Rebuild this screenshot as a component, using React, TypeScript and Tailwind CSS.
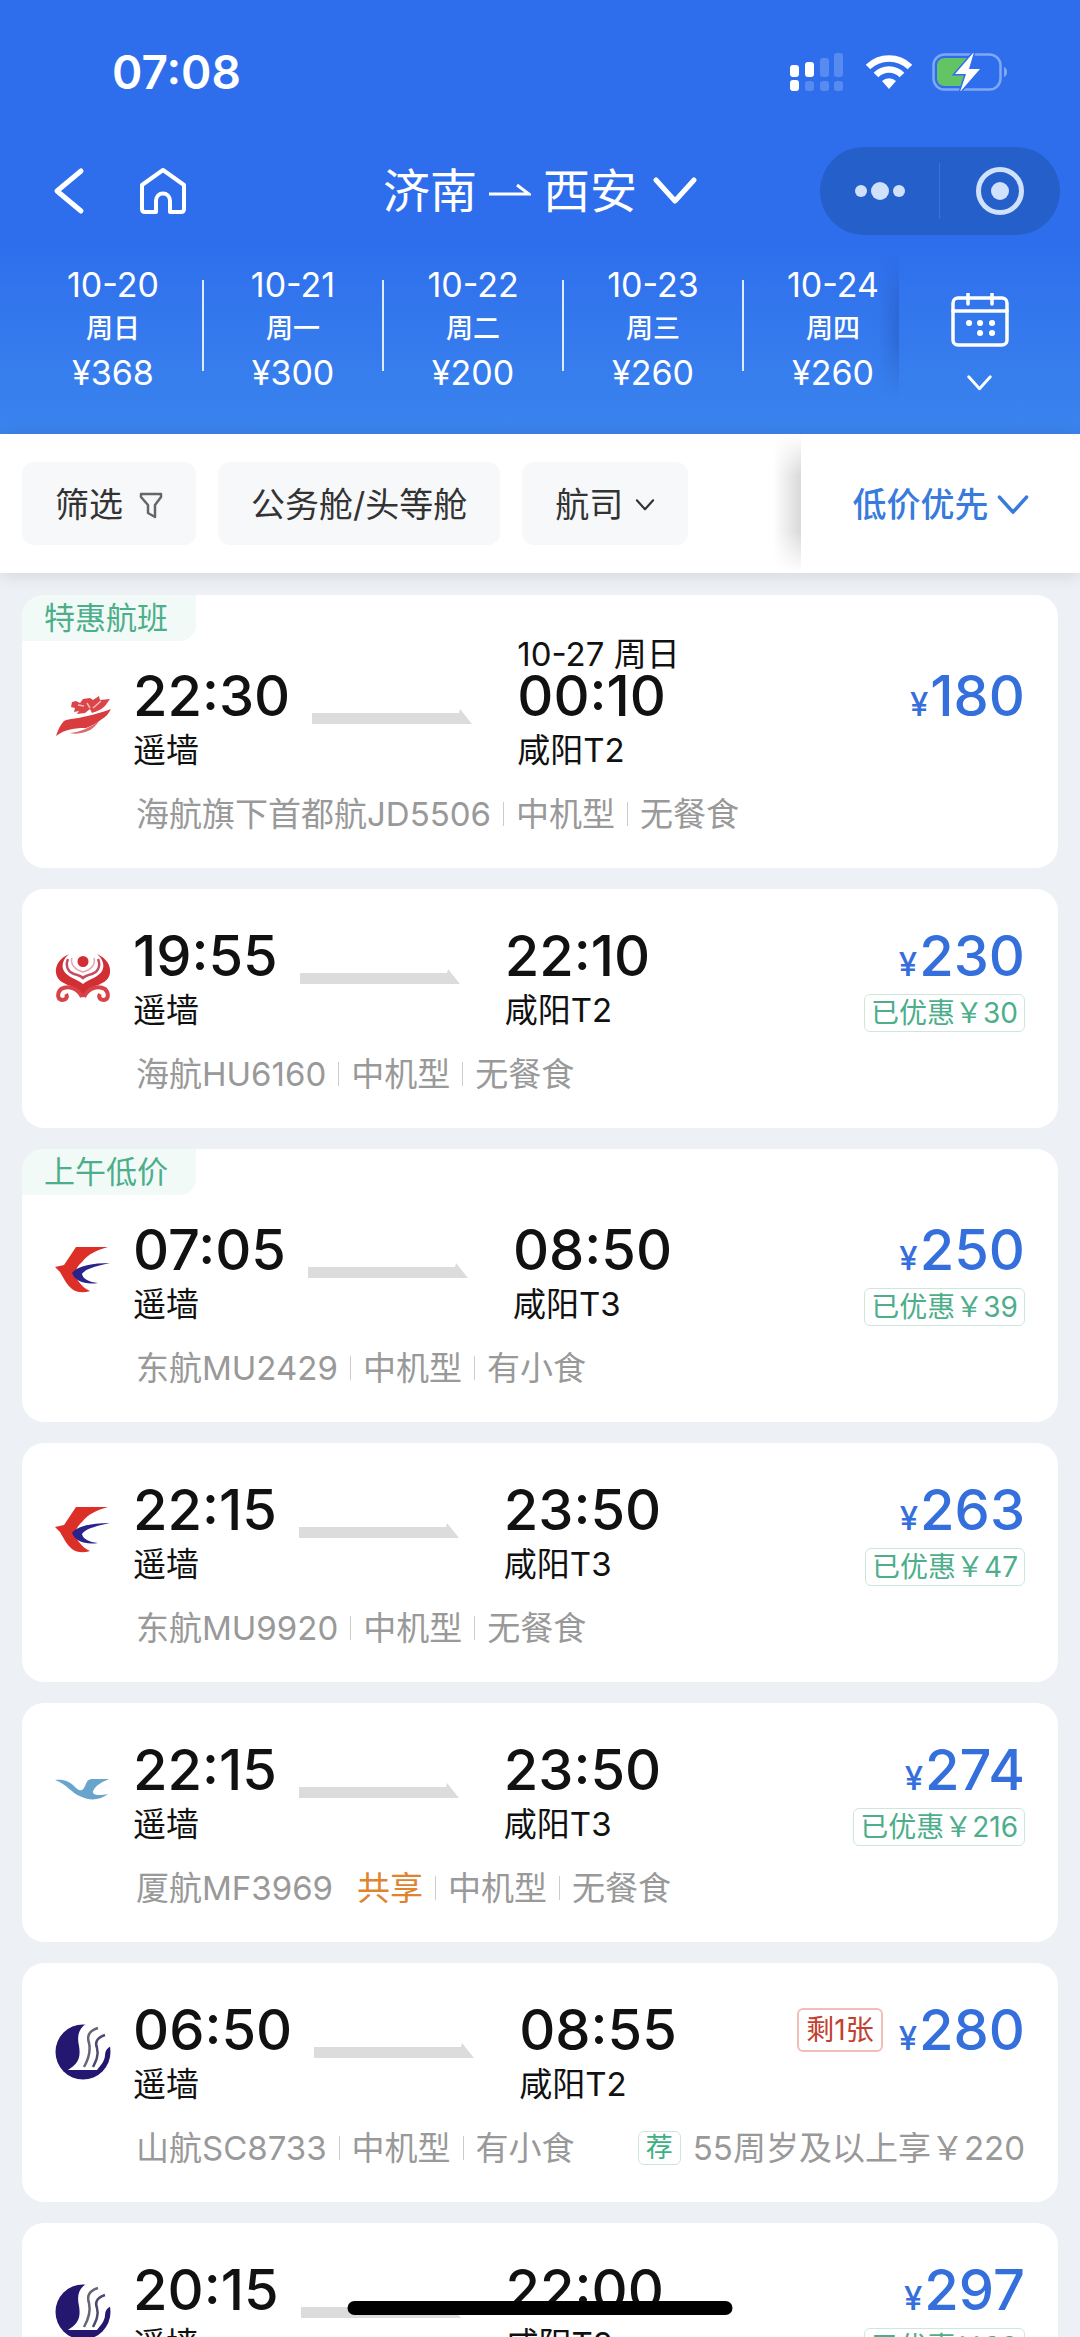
import clsx from "clsx";
import type { ReactNode } from "react";

type Airline = "capital" | "hainan" | "eastern" | "xiamen" | "shandong";

interface Flight {
  airline: Airline;
  departTime: string;
  arriveTime: string;
  arriveAirport: string;
  arriveDate?: string;
  flightNo: string;
  codeShare?: boolean;
  details: string[];
  price: number;
  discount?: number;
  seatsLeft?: number;
  promo?: string;
  tag?: string;
}

const DATES = [
  { date: "10-20", weekday: "周日", price: 368 },
  { date: "10-21", weekday: "周一", price: 300 },
  { date: "10-22", weekday: "周二", price: 200 },
  { date: "10-23", weekday: "周三", price: 260 },
  { date: "10-24", weekday: "周四", price: 260 },
];

const FLIGHTS: Flight[] = [
  {
    airline: "capital",
    departTime: "22:30",
    arriveTime: "00:10",
    arriveAirport: "咸阳T2",
    arriveDate: "10-27 周日",
    flightNo: "海航旗下首都航JD5506",
    details: ["中机型", "无餐食"],
    price: 180,
    tag: "特惠航班",
  },
  {
    airline: "hainan",
    departTime: "19:55",
    arriveTime: "22:10",
    arriveAirport: "咸阳T2",
    flightNo: "海航HU6160",
    details: ["中机型", "无餐食"],
    price: 230,
    discount: 30,
  },
  {
    airline: "eastern",
    departTime: "07:05",
    arriveTime: "08:50",
    arriveAirport: "咸阳T3",
    flightNo: "东航MU2429",
    details: ["中机型", "有小食"],
    price: 250,
    discount: 39,
    tag: "上午低价",
  },
  {
    airline: "eastern",
    departTime: "22:15",
    arriveTime: "23:50",
    arriveAirport: "咸阳T3",
    flightNo: "东航MU9920",
    details: ["中机型", "无餐食"],
    price: 263,
    discount: 47,
  },
  {
    airline: "xiamen",
    departTime: "22:15",
    arriveTime: "23:50",
    arriveAirport: "咸阳T3",
    flightNo: "厦航MF3969",
    codeShare: true,
    details: ["中机型", "无餐食"],
    price: 274,
    discount: 216,
  },
  {
    airline: "shandong",
    departTime: "06:50",
    arriveTime: "08:55",
    arriveAirport: "咸阳T2",
    flightNo: "山航SC8733",
    details: ["中机型", "有小食"],
    price: 280,
    seatsLeft: 1,
    promo: "55周岁及以上享￥220",
  },
  {
    airline: "shandong",
    departTime: "20:15",
    arriveTime: "22:00",
    arriveAirport: "咸阳T2",
    flightNo: "山航",
    details: ["中机型"],
    price: 297,
    discount: 33,
  },
];

function ChevronDown({ className, strokeWidth = 4 }: { className: string; strokeWidth?: number }) {
  return (
    <svg
      viewBox="0 0 44 28"
      className={className}
      fill="none"
      stroke="currentColor"
      strokeWidth={strokeWidth}
      strokeLinecap="round"
      strokeLinejoin="round"
      aria-hidden="true"
    >
      <path d="M3 3l19 21L41 3" />
    </svg>
  );
}

const LOGOS: Record<Airline, ReactNode> = {
  capital: (
    <>
      <path
        d="M1 46c2-6 4-11 8-15 6-3 13-2 19-4 9-2 17-4 28-8-3 5-5 8-9 10-5 4-10 7-16 9-11 0-21 1-30 8z"
        fill="#d93c3e"
      />
      <path d="M15 43c10-1 20-5 29-12-5 8-11 11-18 12-4 1-8 1-11 0z" fill="#dc6a6c" />
      <path
        d="M17 12l4-1 4 2 3-4 7-1 3 2 6-4 1 4 10-1-5 7c-4 4-8 5-13 7l-2-4-5 4-8 1 2-3-5 1 1-4-4-1z"
        fill="#db4547"
      />
      <path d="M23 15l6 1M32 13l3 5M38 18l8-7" stroke="#f3bcbc" strokeWidth="1.500" fill="none" />
    </>
  ),
  hainan: (
    <>
      <circle cx="28" cy="11.500" r="5.500" fill="#d22f35" />
      <path
        d="M14 4C5 8 0 15 1 23c1 8 9 11 17 14 5 2 8 5 10 11 2-6 5-9 10-11 8-3 16-6 17-14 1-8-4-15-13-19 6 5 8 12 5 17-3 6-13 8-19 13-6-5-16-7-19-13-3-5-1-12 5-17z"
        fill="#d22f35"
      />
      <path d="M13 9c-3 7 0 13 6 15 4 1 7 2 9 4 2-2 5-3 9-4 6-2 9-8 6-15" stroke="#c94a63" strokeWidth="2.500" fill="none" />
      <path d="M17 8c-2 6 3 12 11 14 8-2 13-8 11-14" stroke="#e9a3b0" strokeWidth="1.500" fill="none" />
      <path
        d="M27 47c-4-9-14-12-21-8-4 4-4 10 1 11 4 0 6-3 4-6M29 47c4-9 14-12 21-8 4 4 4 10-1 11-4 0-6-3-4-6"
        stroke="#d8434a"
        strokeWidth="4"
        fill="none"
      />
    </>
  ),
  eastern: (
    <>
      <path d="M21 3h32c-11 3-20 7-26 15-8 7-8 14-3 20 3 4 6 7 11 9-6 2-13 2-18-2C12 41 9 35 5 28l-5-5 9-2z" fill="#dc2f27" />
      <path
        d="M55 19c-18 0-33 3-38 10 3 8 13 12 26 10-9-1-15-4-16-9 3-5 14-8 28-11z"
        fill="#28248c"
      />
    </>
  ),
  xiamen: (
    <path
      d="M0 16c9-1 15 2 19 6 3 3 5 5 8 4 4-2 3-10 9-11h18c-7 3-13 6-16 12-1 4 5 5 15 3-7 6-18 7-26 3C17 30 12 20 0 16z"
      fill="#68a4cb"
    />
  ),
  shandong: (
    <>
      <circle cx="28" cy="28" r="27.500" fill="#23176f" />
      <path
        d="M31 0c-8 5-9 13-7 22 2 12-1 18-11 24h29c5-6 8-10 8-15 0-4 2-7 6-9L58 0z"
        fill="#fff"
      />
      <path d="M43 4c-10 3-11 9-9 15 2 9-1 17-5 24" stroke="#676577" strokeWidth="2.500" fill="none" />
      <path d="M50 11c-9 3-10 8-8 13 2 7-1 13-4 19" stroke="#4c4870" strokeWidth="2.500" fill="none" />
    </>
  ),
};

function StatusBar() {
  return (
    <div className="flex items-center justify-between pt-11 pr-[72px] pl-28">
      <time className="text-[46px] leading-[56px] font-semibold">07:08</time>
      <div className="flex items-center gap-5">
        <svg viewBox="0 0 56 40" className="h-10 w-14" fill="#fff" aria-hidden="true">
          <rect x="0" y="13" width="9" height="12" rx="3" />
          <rect x="15" y="10" width="9" height="15" rx="3" />
          <g opacity=".2">
            <rect x="30" y="6" width="9" height="19" rx="3" />
            <rect x="44" y="1" width="9" height="24" rx="3" />
            <rect x="15" y="29" width="9" height="10" rx="3" />
            <rect x="30" y="29" width="9" height="10" rx="3" />
            <rect x="44" y="29" width="9" height="10" rx="3" />
          </g>
          <rect x="0" y="28" width="9" height="11" rx="3" />
        </svg>
        <svg viewBox="0 0 46 36" className="h-9 w-[46px]" aria-hidden="true">
          <g fill="none" stroke="#fff" strokeWidth="6.500">
            <path d="M2 13a30 30 0 0 1 42 0" />
            <path d="M10 21a18 18 0 0 1 26 0" />
          </g>
          <path d="M16 27a10 10 0 0 1 14 0l-7 8z" fill="#fff" />
        </svg>
        <svg viewBox="0 0 76 38" className="h-[38px] w-[76px]" aria-hidden="true">
          <rect x="1.500" y="1.500" width="67" height="35" rx="11" fill="none" stroke="#7fa8f4" strokeWidth="2.500" />
          <path d="M72 14c4 1 4 9 0 10z" fill="#7fa8f4" />
          <path d="M13 5h22v28H13c-5 0-8-3-8-8V13c0-5 3-8 8-8z" fill="#63c466" />
          <path
            d="M42-1L23 21h11l-6 18 20-23H37l5-17z"
            fill="#fff"
            stroke="#2e6eec"
            strokeWidth="3"
            paintOrder="stroke"
          />
        </svg>
      </div>
    </div>
  );
}

function NavBar() {
  return (
    <div className="mt-[47px] grid grid-cols-3 items-center px-5">
      <div className="flex items-center gap-[53px] pl-8">
        <button type="button" aria-label="返回">
          <svg viewBox="0 0 34 48" className="h-12 w-[34px]" fill="none" stroke="#fff" strokeWidth="5" strokeLinecap="round" strokeLinejoin="round">
            <path d="M29 4L5 24l24 20" />
          </svg>
        </button>
        <button type="button" aria-label="首页">
          <svg viewBox="0 0 48 48" className="size-12" fill="none" stroke="#fff" strokeWidth="4" strokeLinejoin="round">
            <path d="M3 18L24 3l21 15v24q0 3-3 3H31V34c0-10-14-10-14 0v11H6q-3 0-3-3z" />
          </svg>
        </button>
      </div>
      <button type="button" className="flex items-center justify-center gap-3 whitespace-nowrap">
        <span className="text-[47px] leading-[60px]">济南</span>
        <svg viewBox="0 0 42 16" className="h-4 w-[42px]" fill="none" stroke="#fff" strokeWidth="3" aria-hidden="true">
          <path d="M0 11h40L28 2" />
        </svg>
        <span className="text-[47px] leading-[60px]">西安</span>
        <ChevronDown className="ml-1 h-7 w-11" strokeWidth={5} />
      </button>
      <div className="flex h-[88px] w-[240px] items-center justify-self-end rounded-full bg-[#245fca]">
        <button type="button" aria-label="更多" className="flex flex-1 items-center justify-center gap-1">
          <span className="size-3 rounded-full bg-[#d0e2fb]" />
          <span className="size-[18px] rounded-full bg-[#d0e2fb]" />
          <span className="size-3 rounded-full bg-[#d0e2fb]" />
        </button>
        <span className="h-14 w-px bg-[#3d70d0]" />
        <button type="button" aria-label="关闭" className="flex flex-1 items-center justify-center">
          <span className="flex size-12 items-center justify-center rounded-full border-[5px] border-[#d0e2fb]">
            <span className="size-[18px] rounded-full bg-[#d0e2fb]" />
          </span>
        </button>
      </div>
    </div>
  );
}

function DateStrip() {
  return (
    <div className="mt-4 flex h-[183px]">
      <div className="flex min-w-0 flex-1 overflow-hidden pl-6">
        {DATES.map((item, index) => (
          <div key={item.date} className="flex shrink-0 items-start">
            <button
              type="button"
              className="flex w-[178px] flex-col items-center pt-3 text-[34px] leading-[44px]"
            >
              <span>{item.date}</span>
              <span className="text-[27px] font-medium">{item.weekday}</span>
              <span>¥{item.price}</span>
            </button>
            {index < DATES.length - 1 && <span className="mt-[29px] h-[91px] w-0.5 bg-[#dcebfd]" />}
          </div>
        ))}
      </div>
      <button
        type="button"
        aria-label="选择日期"
        className="relative flex w-[181px] flex-col items-center gap-7 pt-[42px] pr-5"
      >
        <span className="absolute top-0 right-full h-[150px] w-5 bg-linear-to-r from-transparent to-blue-900/25 mask-y-from-60%" />
        <svg viewBox="0 0 58 54" className="h-[54px] w-[58px]" fill="none" stroke="#fff" strokeWidth="3.500" strokeLinecap="round">
          <rect x="2" y="5" width="54" height="47" rx="5" />
          <path d="M2 18h54M17 1v10M41 1v10" />
          <path d="M18 30h.1M29 30h.1M41 30h.1M29 40h.1M41 40h.1" strokeWidth="6" />
        </svg>
        <ChevronDown className="h-4 w-[25px]" strokeWidth={5} />
      </button>
    </div>
  );
}

function FilterBar() {
  const buttonClass = "flex h-[83px] items-center rounded-xl bg-[#f7f8fa] px-[33px] pt-0.5 text-[34px] text-[#333]";

  return (
    <div className="relative z-10 flex h-[139px] shrink-0 bg-white shadow-[0_2px_16px_rgba(0,0,0,0.12)]">
      <div className="flex min-w-0 flex-1 items-center gap-[22px] overflow-hidden pl-[22px] whitespace-nowrap">
        <button type="button" className={clsx(buttonClass, "gap-4")}>
          筛选
          <svg viewBox="0 0 24 28" className="h-7 w-6" fill="none" stroke="#666" strokeWidth="2.500" strokeLinejoin="round">
            <path d="M2 3h20v3l-6 8v12l-7-4v-8L2 6z" />
          </svg>
        </button>
        <button type="button" className={buttonClass}>
          公务舱/头等舱
        </button>
        <button type="button" className={clsx(buttonClass, "gap-3")}>
          航司
          <ChevronDown className="h-3 w-5" strokeWidth={5} />
        </button>
      </div>
      <button
        type="button"
        className="relative flex w-[279px] items-center justify-center gap-2 pt-0.5 text-[34px] font-medium text-[#387bdc]"
      >
        <span className="absolute inset-y-0 right-full w-7 bg-linear-to-r from-transparent to-black/15 mask-y-from-70%" />
        低价优先
        <ChevronDown className="h-5 w-8" strokeWidth={5} />
      </button>
    </div>
  );
}

function Divider() {
  return <span className="mx-3 h-6 w-px bg-[#ccc]" />;
}

function FlightCard({ flight }: { flight: Flight }) {
  return (
    <li className="overflow-hidden rounded-[22px] bg-white">
      {flight.tag && (
        <div className="-mb-3 flex h-[46px] w-[174px] items-center rounded-br-2xl bg-[#f1faf7] pl-[22px] text-[31px] text-[#4cae8a]">
          {flight.tag}
        </div>
      )}
      <div className="flex px-[33px] pt-[37px] pb-[34px]">
        <svg viewBox="0 0 56 56" className="mt-6 mr-[22px] size-14 shrink-0" aria-hidden="true">
          {LOGOS[flight.airline]}
        </svg>
        <div className="min-w-0 flex-1 whitespace-nowrap">
          <div className="flex text-[#111]">
            <div>
              <p className="text-[56px] leading-[60px] font-medium">{flight.departTime}</p>
              <p className="text-[33px] leading-[48px]">遥墙</p>
            </div>
            <svg viewBox="0 0 160 15" className="mt-[43px] mr-[45px] ml-[22px] h-[15px] w-40" aria-hidden="true">
              <path d="M0 4h147l1-4 12 15H0z" fill="#dcdcdc" />
            </svg>
            <div className="relative">
              {flight.arriveDate && (
                <p className="absolute bottom-full -mb-2 text-[33px] leading-10">{flight.arriveDate}</p>
              )}
              <p className="text-[56px] leading-[60px] font-medium">{flight.arriveTime}</p>
              <p className="text-[33px] leading-[48px]">{flight.arriveAirport}</p>
            </div>
            <div className="ml-auto flex flex-col items-end">
              <div className="flex items-center gap-4">
                {flight.seatsLeft && (
                  <span className="rounded-md border-2 border-[#f0bfba] px-[7px] text-[28px] leading-10 text-[#c3402f]">
                    剩{flight.seatsLeft}张
                  </span>
                )}
                <p className="flex items-baseline text-[56px] leading-[60px] font-medium text-[#346fdc]">
                  <span className="mr-0.5 text-[33px] leading-none">¥</span>
                  {flight.price}
                </p>
              </div>
              {flight.discount && (
                <span className="mt-2 rounded-md border border-[#cfe6dd] px-1.5 text-[28px] leading-9 text-[#4cae8a]">
                  已优惠￥{flight.discount}
                </span>
              )}
            </div>
          </div>
          <div className="mt-5 flex items-center pl-[3px] text-[33px] leading-10 text-[#999]">
            <span>{flight.flightNo}</span>
            {flight.codeShare && <span className="ml-6 text-[#e0832f]">共享</span>}
            {flight.details.map((detail) => (
              <span key={detail} className="flex items-center">
                <Divider />
                {detail}
              </span>
            ))}
            {flight.promo && (
              <span className="ml-auto flex items-center gap-3">
                <span className="rounded-md border border-[#cfe6dd] px-[7px] text-[27px] leading-8 text-[#3fb083]">
                  荐
                </span>
                {flight.promo}
              </span>
            )}
          </div>
        </div>
      </div>
    </li>
  );
}

export default function App() {
  return (
    <div className="relative flex h-screen flex-col overflow-hidden bg-[#edf1f5] font-['Inter','Noto_Sans_CJK_SC',sans-serif]">
      <header className="shrink-0 bg-linear-to-b from-[#2e6eec] from-55% to-[#3b84ee] text-white">
        <StatusBar />
        <NavBar />
        <DateStrip />
      </header>
      <FilterBar />
      <main className="min-h-0 flex-1 overflow-hidden px-[22px] pt-[22px]">
        <ul className="flex flex-col gap-[21px]">
          {FLIGHTS.map((flight) => (
            <FlightCard key={flight.flightNo} flight={flight} />
          ))}
        </ul>
      </main>
      <div className="absolute bottom-[22px] left-1/2 h-3.5 w-[385px] -translate-x-1/2 rounded-full bg-black" />
    </div>
  );
}
